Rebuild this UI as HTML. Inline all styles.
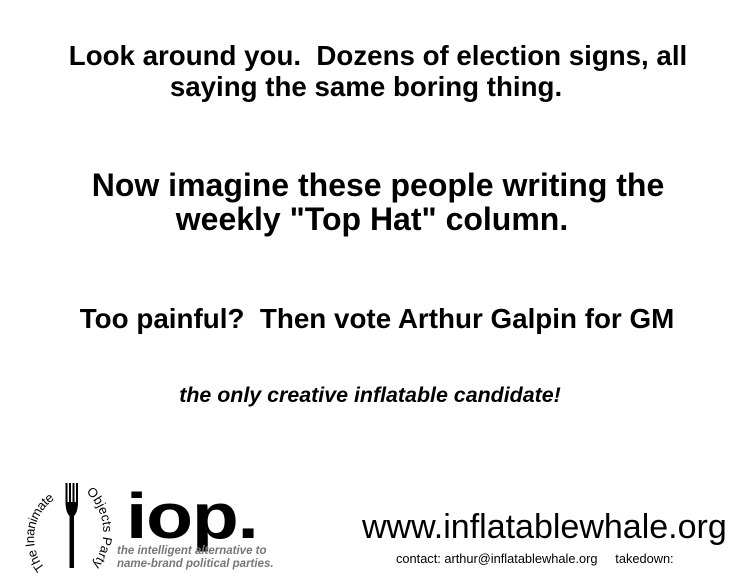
<!DOCTYPE html>
<html><head><style>
body{margin:0;width:756px;height:576px;background:#fff;position:relative;overflow:hidden;font-family:"Liberation Sans",Arial,sans-serif;color:#000}
.t{position:absolute;left:0;width:756px;text-align:center;font-weight:bold;white-space:pre;line-height:1}
</style></head><body>
<div class="t" style="top:42px;font-size:27.7px;left:0px">Look around you.  Dozens of election signs, all</div>
<div class="t" style="top:73px;font-size:27.7px;left:-12px">saying the same boring thing.</div>
<div class="t" style="top:169px;font-size:32px;left:0px">Now imagine these people writing the</div>
<div class="t" style="top:203px;font-size:32px;left:-6px">weekly "Top Hat" column.</div>
<div class="t" style="top:305px;font-size:27.8px;left:-1px">Too painful?  Then vote Arthur Galpin for GM</div>
<div class="t" style="top:385px;font-size:21.4px;font-style:italic;left:-8px">the only creative inflatable candidate!</div>
<div style="position:absolute;left:362px;top:510px;font-size:34px;white-space:nowrap;line-height:1">www.inflatablewhale.org</div>
<div style="position:absolute;left:396px;top:553px;font-size:12.8px;white-space:pre;line-height:1">contact: arthur@inflatablewhale.org     takedown:</div>
<svg style="position:absolute;left:0;top:470px" width="300" height="106">
<defs>
<path id="la" d="M45,98 A47,47 0 0 1 62,25"/>
<path id="ra" d="M86,22 A55,55 0 0 1 88,100"/>
</defs>
<text font-family="Liberation Sans" font-size="13" fill="#000"><textPath href="#la" textLength="78" lengthAdjust="spacing">The Inanimate</textPath></text>
<text font-family="Liberation Sans" font-size="13" fill="#000"><textPath href="#ra" textLength="80" lengthAdjust="spacing">Objects Party</textPath></text>
<rect x="65.5" y="13" width="2" height="22" fill="#000"/>
<rect x="69" y="13" width="2" height="22" fill="#000"/>
<rect x="72.5" y="13" width="2" height="22" fill="#000"/>
<rect x="76" y="13" width="2" height="22" fill="#000"/>
<path d="M65.5,32 Q65.5,42 69.5,46 L69.5,98 L74,98 L74,46 Q78,42 78,32 Z" fill="#000"/>
<text x="0" y="68" transform="translate(126,0) scale(1.2,1)" font-family="Liberation Sans" font-weight="bold" font-size="64" letter-spacing="-1">iop.</text>
<text x="117" y="84" font-family="Liberation Sans" font-weight="bold" font-style="italic" font-size="11.5" fill="#777">the intelligent alternative to</text>
<text x="117" y="97" font-family="Liberation Sans" font-weight="bold" font-style="italic" font-size="11.5" fill="#777">name-brand political parties.</text>
</svg>
</body></html>
